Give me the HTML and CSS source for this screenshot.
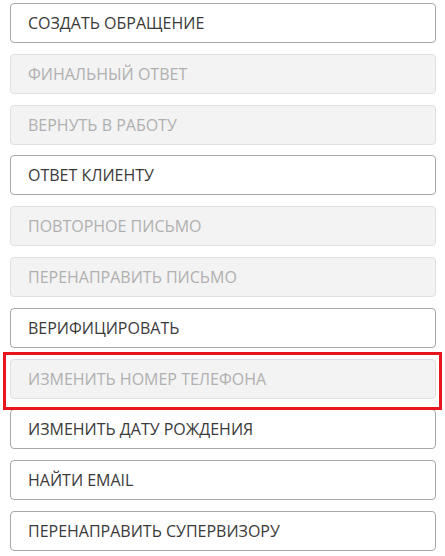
FILE: index.html
```html
<!DOCTYPE html>
<html lang="ru">
<head>
<meta charset="utf-8">
<link rel="stylesheet" href="styles.css">
</head>
<body>
<div class="list">
  <button class="btn">Создать обращение</button>
  <button class="btn" disabled>Финальный ответ</button>
  <button class="btn" disabled>Вернуть в работу</button>
  <button class="btn">Ответ клиенту</button>
  <button class="btn" disabled>Повторное письмо</button>
  <button class="btn" disabled>Перенаправить письмо</button>
  <button class="btn">Верифицировать</button>
  <div class="highlight"><button class="btn" disabled>Изменить номер телефона</button></div>
  <button class="btn">Изменить дату рождения</button>
  <button class="btn">Найти email</button>
  <button class="btn">Перенаправить супервизору</button>
</div>
</body>
</html>
```

FILE: styles.css
```css
html, body {
  margin: 0;
  padding: 0;
  background: #fff;
}
.list {
  display: flex;
  flex-direction: column;
  gap: 10.8px;
  padding: 3px 9px 0 10px;
}
.btn {
  display: block;
  width: 100%;
  height: 40px;
  box-sizing: border-box;
  margin: 0;
  padding: 0 17px;
  text-align: left;
  font-family: "Open Sans", sans-serif;
  font-size: 16px;
  text-transform: uppercase;
  color: #3a3a3a;
  background: #fff;
  border: 1px solid #a8a8a8;
  border-radius: 4px;
}
.btn:disabled {
  color: #b0b0b0;
  background: #f3f3f3;
  border-color: #e0e0e0;
}
.highlight {
  position: relative;
}
.highlight::after {
  content: "";
  position: absolute;
  left: -7px;
  right: -6px;
  top: -7px;
  bottom: -11px;
  border: 3px solid #e8141e;
  pointer-events: none;
}
```
